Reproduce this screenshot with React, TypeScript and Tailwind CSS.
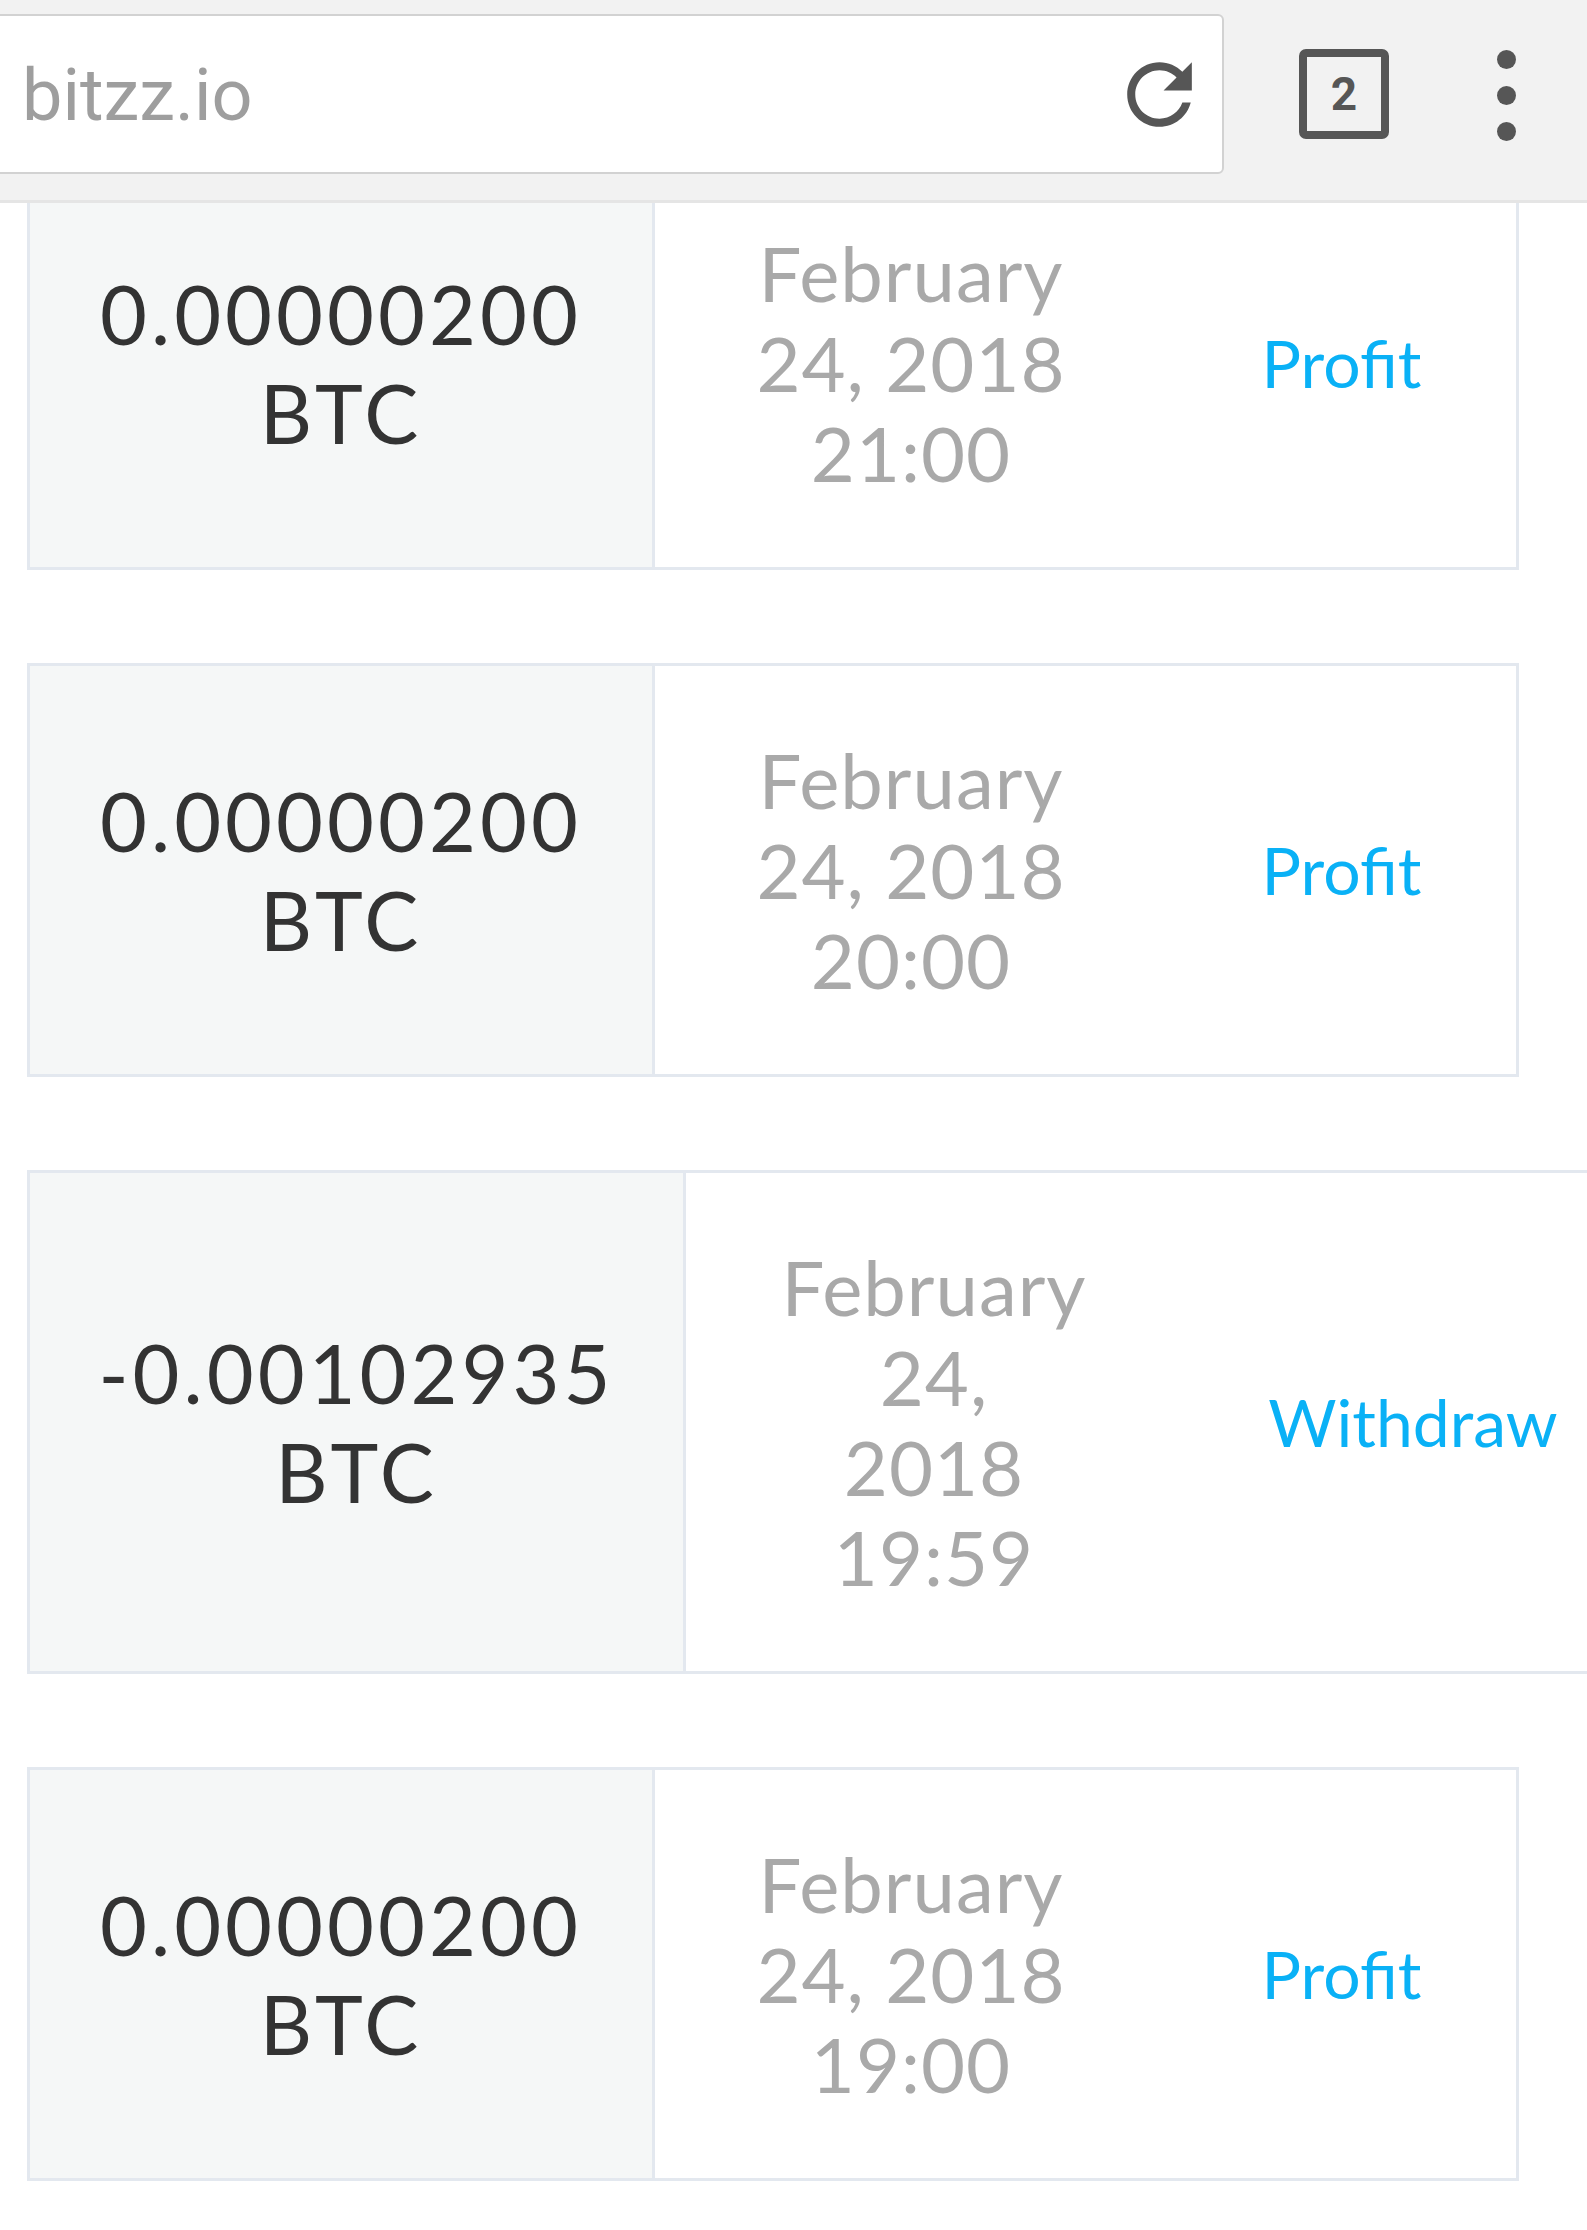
import React from "react";

type Row = {
  amount: string;
  date: string[];
  kind: string;
  wide?: boolean;
};

const rows: Row[] = [
  { amount: "0.00000200", date: ["February", "24, 2018", "21:00"], kind: "Profit" },
  { amount: "0.00000200", date: ["February", "24, 2018", "20:00"], kind: "Profit" },
  { amount: "-0.00102935", date: ["February", "24,", "2018", "19:59"], kind: "Withdraw", wide: true },
  { amount: "0.00000200", date: ["February", "24, 2018", "19:00"], kind: "Profit" },
];

function RefreshIcon() {
  return (
    <svg width="97" height="97" viewBox="0 0 24 24" fill="#565656">
      <path d="M17.65 6.35C16.2 4.9 14.21 4 12 4c-4.42 0-7.990 3.58-7.99 8s3.57 8 7.99 8c3.73 0 6.84-2.55 7.73-6h-2.08c-.82 2.33-3.04 4-5.65 4-3.31 0-6-2.69-6-6s2.69-6 6-6c1.66 0 3.14.69 4.22 1.780L13 11h7V4l-2.35 2.35z" />
    </svg>
  );
}

function TopBar() {
  return (
    <div className="relative z-10 flex h-[203px] items-center border-b-[3px] border-[#e5e5e5] bg-[#f2f2f2] pb-[12px]">
      <div className="-ml-[10px] flex h-[160px] w-[1234px] shrink-0 items-center justify-between rounded-r-[6px] border-2 border-[#d2d2d2] bg-white pl-[30px] pr-[14px]">
        <span className="pt-[4px] font-['Roboto',sans-serif] text-[72px] leading-none text-[#9e9e9e]">
          bitzz.io
        </span>
        <RefreshIcon />
      </div>
      <div className="ml-[75px] flex h-[90px] w-[90px] shrink-0 items-center justify-center rounded-[7px] border-[8px] border-[#565656]">
        <span className="font-['Roboto',sans-serif] text-[46px] font-bold leading-none text-[#565656]">2</span>
      </div>
      <div className="ml-[108px] flex flex-col items-center gap-[17px] pt-[2px]">
        <span className="block h-[19px] w-[19px] rounded-full bg-[#565656]" />
        <span className="block h-[19px] w-[19px] rounded-full bg-[#565656]" />
        <span className="block h-[19px] w-[19px] rounded-full bg-[#565656]" />
      </div>
    </div>
  );
}

function Card({ row }: { row: Row }) {
  const amountW = row.wide ? "w-[656px]" : "w-[625px]";
  const dateW = row.wide ? "w-[496px]" : "w-[512px]";
  const kindW = row.wide ? "w-[462px]" : "w-[349px]";
  return (
    <div className="ml-[27px] flex w-max shrink-0 border-[3px] border-[#e3e8ef] bg-white font-['Lato',sans-serif]">
      <div
        className={`${amountW} flex shrink-0 flex-col items-center justify-center border-r-[3px] border-[#e3e8ef] bg-[#f5f7f7] text-[81px] leading-[99px] tracking-[4px] text-[#333333]`}
      >
        <div>{row.amount}</div>
        <div>BTC</div>
      </div>
      <div
        className={`${dateW} flex shrink-0 flex-col items-center justify-center py-[69px] text-[76px] leading-[90px] tracking-[1px] text-[#a9a9a9]`}
      >
        {row.date.map((l, i) => (
          <div key={i}>{l}</div>
        ))}
      </div>
      <div className={`${kindW} flex shrink-0 items-center justify-center text-[66px] leading-[80px] text-[#0ab1f6]`}>
        {row.kind}
      </div>
    </div>
  );
}

export default function App() {
  return (
    <div className="h-[2230px] w-[1587px] overflow-hidden bg-white">
      <TopBar />
      <div className="-mt-[47px] flex flex-col gap-[93px]">
        {rows.map((r, i) => (
          <Card key={i} row={r} />
        ))}
      </div>
    </div>
  );
}
